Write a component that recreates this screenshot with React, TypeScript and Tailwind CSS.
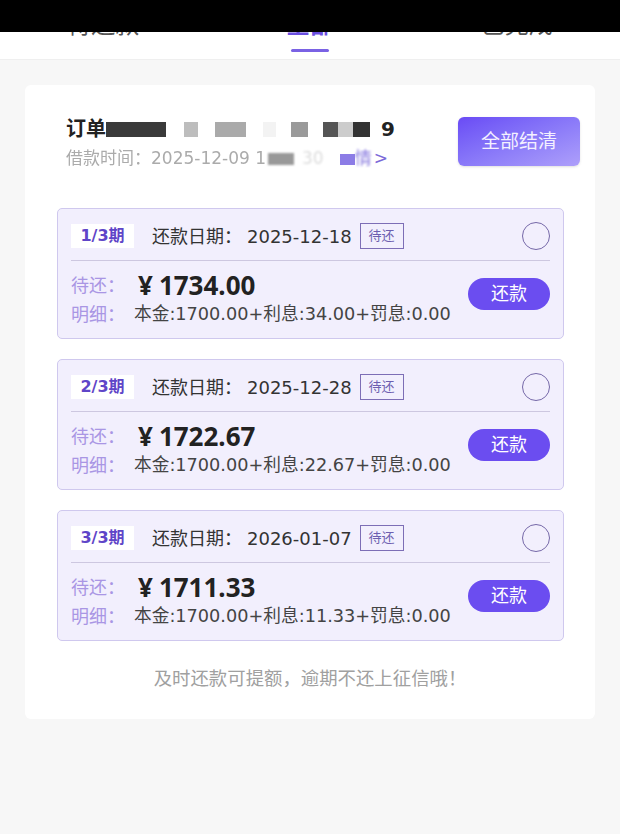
import React from 'react';

const plans = [
  { period: '1/3期', date: '2025-12-18', amount: '1734.00', interest: '34.00' },
  { period: '2/3期', date: '2025-12-28', amount: '1722.67', interest: '22.67' },
  { period: '3/3期', date: '2026-01-07', amount: '1711.33', interest: '11.33' },
];

const tabs = ['待还款', '全部', '已完成'];

export default function App() {
  return (
    <div className="relative min-h-[834px] bg-[#f7f7f7] font-['DejaVu_Sans','Noto_Sans_CJK_SC',sans-serif]">
      {/* status bar cover */}
      <div className="absolute top-0 left-0 right-0 h-[32px] bg-black z-10" />

      {/* tabs */}
      <div className="flex h-[60px] bg-white border-b border-[#efefef]">
        {tabs.map((tab, i) => (
          <div key={tab} className="flex-1 flex flex-col items-center pt-[13px]">
            <span
              className={`text-[24px] leading-[24px] ${
                i === 1 ? 'text-[#6a4fe0] font-bold' : 'text-[#555]'
              }`}
            >
              {tab}
            </span>
            {i === 1 && <div className="mt-[12px] h-[3px] w-[38px] rounded-full bg-[#7a62e4]" />}
          </div>
        ))}
      </div>

      {/* order card */}
      <div className="mx-[25px] mt-[25px] bg-white rounded-[6px] pt-[32px] pb-[26px]">
        <div className="flex items-start justify-between pl-[41px] pr-[15px]">
          <div>
            <div className="flex items-center h-[24px] text-[20px] font-bold text-[#222]">
              <span>订单</span>
              <span className="flex items-center blur-[0.5px]">
                <span className="inline-block h-[15px] w-[60px] bg-[#3a3a3a]" />
                <span className="inline-block h-[15px] w-[14px] ml-[18px] bg-[#bdbdbd]" />
                <span className="inline-block h-[15px] w-[31px] ml-[17px] bg-[#aaaaaa]" />
                <span className="inline-block h-[15px] w-[13px] ml-[17px] bg-[#f3f3f3]" />
                <span className="inline-block h-[15px] w-[17px] ml-[15px] bg-[#9a9a9a]" />
                <span className="inline-block h-[15px] w-[15px] ml-[15px] bg-[#555]" />
                <span className="inline-block h-[15px] w-[15px] bg-[#cccccc]" />
                <span className="inline-block h-[15px] w-[17px] bg-[#333]" />
              </span>
              <span className="ml-[11px]">9</span>
            </div>
            <div className="flex items-center mt-[9px] h-[18px] text-[17px] text-[#ababab]">
              <span className="blur-[0.7px]">借款时间：2025-12-09 1</span>
              <span className="inline-block ml-[2px] h-[12px] w-[26px] bg-[#999] blur-[1px]" />
              <span className="ml-[8px] text-[#dcdcdc] blur-[1px]">30</span>
              <span className="inline-block ml-[16px] h-[11px] w-[15px] bg-[#8c7ce6] blur-[0.5px]" />
              <span className="text-[#8e80e0] blur-[0.8px]">情</span>
              <span className="ml-[2px] text-[#7b6ad8]">&gt;</span>
            </div>
          </div>
          <button className="h-[49px] w-[122px] rounded-[6px] bg-linear-to-br from-[#6a4af5] to-[#ae9ffa] text-[19px] text-[#f4f0ff] shadow-sm">
            全部结清
          </button>
        </div>

        <div className="flex flex-col gap-[20px] pl-[32px] pr-[31px] mt-[40px]">
          {plans.map((plan) => (
            <div
              key={plan.period}
              className="h-[131px] rounded-[5px] border border-[#cfc8ee] bg-[#f2effd] px-[13px] pt-[13px]"
            >
              <div className="flex items-center h-[28px]">
                <span className="flex items-center justify-center h-[24px] w-[63px] bg-white text-[16px] font-bold text-[#5f45c8]">
                  {plan.period}
                </span>
                <span className="ml-[18px] text-[18px] text-[#333]">还款日期：</span>
                <span className="ml-[5px] text-[18px] text-[#333]">{plan.date}</span>
                <span className="ml-[8px] flex items-center justify-center h-[26px] w-[44px] border-[1.5px] border-[#7d6eb6] text-[13px] text-[#6d5fb0]">
                  待还
                </span>
                <span className="ml-auto h-[28px] w-[28px] rounded-full border-[1.5px] border-[#7568a8]" />
              </div>
              <div className="mt-[10px] h-px bg-[#cdc7e0]" />
              <div className="flex items-center">
                <div className="flex-1">
                  <div className="flex items-center h-[30px] mt-[9px]">
                    <span className="w-[64px] text-[18px] text-[#a996e4]">待还：</span>
                    <span className="ml-[3px] font-['Noto_Sans',sans-serif] text-[26px] leading-[30px] font-bold text-[#222]">
                      ¥<span className="ml-[6px]">{plan.amount}</span>
                    </span>
                  </div>
                  <div className="flex items-center h-[24px] mt-[2px]">
                    <span className="w-[63px] text-[18px] text-[#a996e4]">明细：</span>
                    <span className="text-[17.7px] text-[#444]">
                      本金:1700.00+利息:{plan.interest}+罚息:0.00
                    </span>
                  </div>
                </div>
                <button className="h-[32px] w-[82px] rounded-full bg-[#6b4df0] text-[18px] text-white">
                  还款
                </button>
              </div>
            </div>
          ))}
        </div>

        <p className="mt-[24px] text-center text-[18.4px] text-[#a0a0a0]">
          及时还款可提额，逾期不还上征信哦！
        </p>
      </div>
    </div>
  );
}
